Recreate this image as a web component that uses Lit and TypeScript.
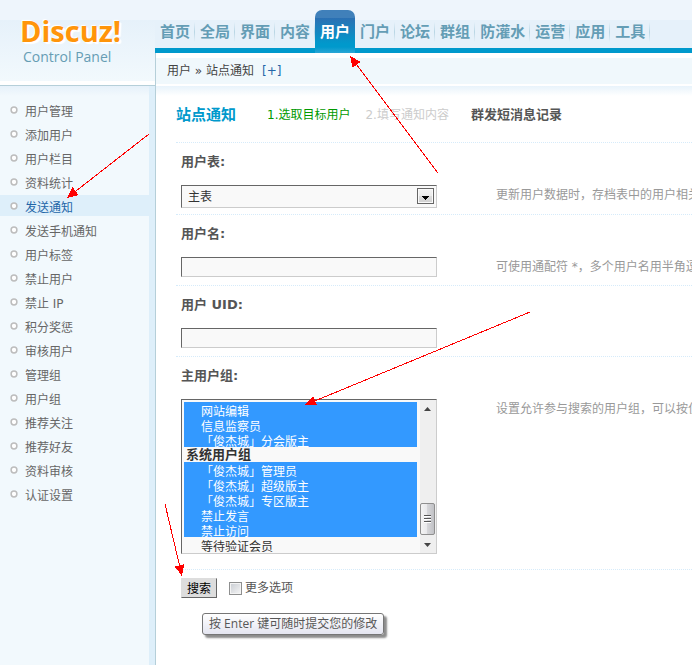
import { LitElement, html, css, svg } from "lit";
import { customElement, property } from "lit/decorators.js";
import { classMap } from "lit/directives/class-map.js";

const NAV = ["首页", "全局", "界面", "内容", "用户", "门户", "论坛", "群组", "防灌水", "运营", "应用", "工具"];

const MENU = [
  "用户管理", "添加用户", "用户栏目", "资料统计", "发送通知", "发送手机通知",
  "用户标签", "禁止用户", "禁止 IP", "积分奖惩", "审核用户", "管理组", "用户组",
  "推荐关注", "推荐好友", "资料审核", "认证设置",
];

const SPECIAL_GROUPS = ["网站编辑", "信息监察员", "「俊杰城」分会版主"];
const SYSTEM_GROUPS = [
  { name: "「俊杰城」管理员", on: true },
  { name: "「俊杰城」超级版主", on: true },
  { name: "「俊杰城」专区版主", on: true },
  { name: "禁止发言", on: true },
  { name: "禁止访问", on: true },
  { name: "等待验证会员", on: false },
];

// Red guide arrows: start point, then tip.
const ARROWS = [
  [438, 173, 350, 56],
  [149, 134, 67, 198],
  [530, 312, 305, 405],
  [165, 504, 182, 576],
];

@customElement("top-header")
class TopHeader extends LitElement {
  @property() active = "";

  static styles = css`
    :host {
      display: grid;
      grid-template-columns: 155px minmax(0, 1fr);
      height: 85px;
      border-bottom: 1px solid #b5cfd9;
      background: linear-gradient(#eef5fc 20px, #e6f1fa 20px, #f2f9fd 81px, #fff 81px);
    }
    a { text-decoration: none; }
    .logo {
      display: block;
      padding: 13px 0 0 20px;
      font-family: "Open Sans", sans-serif;
      white-space: nowrap;
    }
    .brand {
      display: block;
      font-size: 29px;
      line-height: 36px;
      font-weight: 700;
      color: #ff950a;
      text-shadow: 1px 1px 1px #fff, -1px -1px 1px #fff, 2px 2px 1px #fff;
    }
    .panel {
      display: block;
      padding-left: 3px;
      font-size: 14px;
      line-height: 16px;
      color: #669db4;
    }
    .right { display: flex; flex-direction: column; min-width: 0; }
    nav {
      display: flex;
      height: 43px;
      padding-top: 10px;
      background: linear-gradient(#eef5fc 20px, #e6f1fa 20px, #e6f1fa 48px, #0099cc 48px);
    }
    .tab {
      box-sizing: border-box;
      height: 43px;
      padding: 10px 5px 0;
      font-size: 15px;
      line-height: 24px;
      font-weight: 700;
      color: #649db5;
      white-space: nowrap;
      background: linear-gradient(#e6f1fa, #b9d6e4, #e6f1fa) right 12px / 1px 20px no-repeat;
    }
    .tab.active {
      color: #fff;
      border-radius: 7px 7px 0 0;
      background: linear-gradient(#4080ba 8px, #2b70b3 8px, #0099cc 34px, #0099cc 37px, #2ba6d5 43px);
    }
    .crumb {
      flex: 1;
      box-sizing: border-box;
      margin: 5px 0 2px;
      padding-left: 11px;
      font-size: 12px;
      line-height: 26px;
      background: #f0f8fc;
      color: #444;
    }
    .crumbs {
      flex: 1;
      display: flex;
      background: #fff;
      border-left: 1px solid #b5cfd9;
    }
    .add { margin-left: 8px; color: #2366a8; }
  `;

  render() {
    return html`
      <a class="logo" href="#">
        <span class="brand">Discuz!</span>
        <span class="panel">Control Panel</span>
      </a>
      <div class="right">
        <nav>
          ${NAV.map((n) => html`<a href="#" class=${classMap({ tab: true, active: n === this.active })}>${n}</a>`)}
        </nav>
        <div class="crumbs">
          <div class="crumb">用户 » 站点通知<a class="add" href="#">[+]</a></div>
        </div>
      </div>
    `;
  }
}

@customElement("side-menu")
class SideMenu extends LitElement {
  @property() active = "";

  static styles = css`
    :host {
      display: block;
      box-sizing: border-box;
      padding-top: 13px;
      border-right: 6px solid #deeffa;
      background: linear-gradient(#e6f1fa, #f2f9fd 10px);
    }
    ul { list-style: none; margin: 0; padding: 0; }
    .item {
      display: flex;
      align-items: center;
      gap: 7px;
      height: 21px;
      margin-bottom: 3px;
      padding-left: 10px;
      font-size: 12px;
      line-height: 26px;
      color: #666;
      text-decoration: none;
      white-space: nowrap;
    }
    .item.active { background: #deeffa; color: #2366a8; }
    .text { height: 21px; }
    .dot { width: 8px; height: 8px; fill: #fff; stroke: #bdbdbd; stroke-width: 1.5; }
  `;

  render() {
    return html`<ul>
      ${MENU.map((m) => html`<li>
        <a href="#" class=${classMap({ item: true, active: m === this.active })}>
          <svg class="dot" viewBox="0 0 8 8"><circle cx="4" cy="4" r="2.9" /></svg>
          <span class="text">${m}</span>
        </a>
      </li>`)}
    </ul>`;
  }
}

@customElement("notice-form")
class NoticeForm extends LitElement {
  static styles = css`
    :host {
      display: block;
      min-width: 0;
      box-sizing: border-box;
      padding: 8px 0 20px 20px;
      border-left: 1px solid #b5cfd9;
      background: linear-gradient(#e8f3fb, #fff 10px);
    }
    .steps {
      display: flex;
      align-items: center;
      height: 42px;
      padding-bottom: 6px;
      line-height: 24px;
      white-space: nowrap;
    }
    h1 { margin: 0 31px 0 0; font-size: 15px; color: #0099cc; }
    .now { margin-right: 15px; color: #009900; }
    .next { margin-right: 22px; color: #ccc; }
    .log { font-size: 13px; font-weight: 700; color: #555; text-decoration: none; }
    .row {
      display: grid;
      grid-template-columns: 256px minmax(0, 1fr);
      column-gap: 59px;
      padding: 7px 0 8px 5px;
      border-top: 1px dotted #d6ebfa;
    }
    .row.tight { padding-bottom: 6px; }
    .row.tall { padding-bottom: 15px; }
    .name {
      grid-column: 1 / -1;
      height: 35px;
      font-size: 13px;
      line-height: 24px;
      font-weight: 700;
      color: #555;
    }
    .hint {
      height: 20px;
      line-height: 20px;
      color: #999;
      white-space: nowrap;
      overflow: hidden;
    }
    .field {
      box-sizing: border-box;
      width: 100%;
      margin: 0;
      border: 1px solid;
      border-color: #666 #ccc #ccc #666;
      border-radius: 0;
      outline: none;
      background: #f9f9f9;
      font: inherit;
      color: #333;
    }
    input.field { height: 20px; display: block; }
    .wrap { position: relative; }
    select.single { display: block; appearance: none; height: 23px; padding: 1px 6px 0; }
    .drop { position: absolute; top: 3px; right: 3px; width: 17px; height: 16px; pointer-events: none; }
    .list { display: flex; height: 155px; }
    select.multi {
      flex: 1;
      min-width: 0;
      box-sizing: border-box;
      height: 153px;
      margin: 0;
      padding: 2px;
      border: 0;
      border-radius: 0;
      outline: none;
      background: transparent;
      color: #333;
      font: inherit;
      line-height: 14px;
      overflow: hidden;
      scrollbar-width: none;
    }
    .multi option {
      box-sizing: border-box;
      height: 15px;
      min-height: 15px;
      padding: 0 0 0 17px;
      font-size: 12px;
      line-height: 13px;
      font-weight: 400;
      color: #333;
    }
    .multi option:checked {
      background: #3399ff linear-gradient(#3399ff, #3399ff);
      color: #fff;
      -webkit-text-fill-color: #fff;
    }
    /* The built-in group label is 20px tall; pull it into the 15px row rhythm. */
    .multi optgroup { margin-top: -3px; font-size: 13px; font-weight: 700; }
    .multi optgroup option:first-of-type { margin-top: -2px; }
    .bar { width: 17px; height: 153px; flex: none; }
    .submit {
      position: relative;
      display: flex;
      align-items: center;
      padding: 8px 0 0 5px;
      border-top: 1px dotted #d6ebfa;
    }
    button {
      width: 36px;
      height: 20px;
      margin: 0 12px 0 0;
      padding: 1px 0 0;
      border: 1px solid;
      border-color: #ddd #666 #666 #ddd;
      background: #ddd;
      font: inherit;
      line-height: 18px;
      color: #000;
    }
    .more { display: flex; align-items: center; gap: 3px; height: 18px; line-height: 18px; }
    .check {
      appearance: none;
      width: 13px;
      height: 13px;
      margin: 0;
      border: 1px solid #8e8f8f;
      background: linear-gradient(135deg, #c8ccd2, #f6f6f6);
      box-shadow: inset 0 0 0 1px #f4f4f4;
    }
    .tip {
      position: absolute;
      top: 43px;
      left: 26px;
      padding: 0 6px;
      border: 1px solid #767676;
      border-radius: 3px;
      background: linear-gradient(#fff, #e4e5f0);
      box-shadow: 3px 3px 2px rgba(0, 0, 0, 0.45);
      font-family: "Open Sans", "Noto Sans CJK SC", sans-serif;
      line-height: 20px;
      color: #575757;
      white-space: nowrap;
    }
  `;

  render() {
    return html`
      <div class="steps">
        <h1>站点通知</h1>
        <span class="now">1.选取目标用户</span>
        <span class="next">2.填写通知内容</span>
        <a class="log" href="#">群发短消息记录</a>
      </div>
      <div class="row tight">
        <label class="name" for="table">用户表:</label>
        <div class="wrap">
          <select class="field single" id="table"><option>主表</option></select>
          <svg class="drop" viewBox="0 0 17 16">
            <defs><linearGradient id="b" x2="0" y2="1">
              <stop offset="0" stop-color="#f4f4f4" /><stop offset=".5" stop-color="#ebebeb" />
              <stop offset=".5" stop-color="#dcdcdc" /><stop offset="1" stop-color="#d0d0d0" />
            </linearGradient></defs>
            <rect x=".5" y=".5" width="16" height="15" fill="url(#b)" stroke="#666" />
            <rect x="1.5" y="1.5" width="14" height="13" fill="none" stroke="#fafafa" />
            <path d="M5 8h7v1h-1v1h-1v1h-1v1h-1v-1h-1v-1h-1v-1h-1z" fill="#000" />
          </svg>
        </div>
        <span class="hint">更新用户数据时，存档表中的用户相关</span>
      </div>
      <div class="row">
        <label class="name" for="user">用户名:</label>
        <input class="field" id="user" type="text" />
        <span class="hint">可使用通配符 *，多个用户名用半角逗</span>
      </div>
      <div class="row">
        <label class="name" for="uid">用户 UID:</label>
        <input class="field" id="uid" type="text" />
      </div>
      <div class="row tall">
        <label class="name" for="groups">主用户组:</label>
        <div class="field list">
          <select class="multi" id="groups" multiple size="10">
            ${SPECIAL_GROUPS.map((g) => html`<option selected>${g}</option>`)}
            <optgroup label="系统用户组">
              ${SYSTEM_GROUPS.map((g) => html`<option ?selected=${g.on}>${g.name}</option>`)}
            </optgroup>
          </select>
          <svg class="bar" viewBox="0 0 17 153" aria-hidden="true">
            <defs><linearGradient id="t">
              <stop offset="0" stop-color="#f5f5f5" /><stop offset=".45" stop-color="#e9e9eb" />
              <stop offset=".5" stop-color="#d6d6d9" /><stop offset="1" stop-color="#bfc0c4" />
            </linearGradient></defs>
            <rect x="1" width="16" height="153" fill="#efefef" />
            <path d="M5 11h7l-3.500-4z" fill="#444" />
            <path d="M5 143h7l-3.500 4z" fill="#444" />
            <rect x="1.5" y="103.5" width="14" height="31" rx="1.5" fill="url(#t)" stroke="#8f8f8f" />
            <path d="M5 115.5h7M5 118.5h7M5 121.5h7" stroke="#555" />
            <path d="M5 116.5h7M5 119.5h7M5 122.5h7" stroke="#fff" />
          </svg>
        </div>
        <span class="hint">设置允许参与搜索的用户组，可以按住</span>
      </div>
      <div class="submit">
        <button type="button" aria-describedby="tip">搜索</button>
        <label class="more"><input class="check" type="checkbox" />更多选项</label>
        <div class="tip" id="tip" role="tooltip">按 Enter 键可随时提交您的修改</div>
      </div>
    `;
  }
}

@customElement("app-root")
class AppRoot extends LitElement {
  static styles = css`
    :host {
      position: relative;
      display: flex;
      flex-direction: column;
      min-height: 100vh;
      overflow: hidden;
      font: 12px/18px "DejaVu Sans", "Noto Sans CJK SC", sans-serif;
      color: #555;
      background: #fff;
    }
    .body {
      flex: 1;
      display: grid;
      grid-template-columns: 155px minmax(0, 1fr);
    }
    .arrows {
      position: absolute;
      top: 0;
      left: 0;
      width: 692px;
      height: 665px;
      pointer-events: none;
      shape-rendering: crispEdges;
    }
  `;

  render() {
    return html`
      <top-header active="用户"></top-header>
      <div class="body">
        <side-menu active="发送通知"></side-menu>
        <notice-form></notice-form>
      </div>
      <svg class="arrows" viewBox="0 0 692 665" aria-hidden="true">
        <defs>
          <marker id="head" markerUnits="userSpaceOnUse" markerWidth="11" markerHeight="10" refX="11" refY="5" orient="auto">
            <path d="M0 0L11 5L0 10z" fill="#f00" />
          </marker>
        </defs>
        ${ARROWS.map(([x1, y1, x2, y2]) => svg`<line x1=${x1} y1=${y1} x2=${x2} y2=${y2} stroke="#f00" marker-end="url(#head)" />`)}
      </svg>
    `;
  }
}
